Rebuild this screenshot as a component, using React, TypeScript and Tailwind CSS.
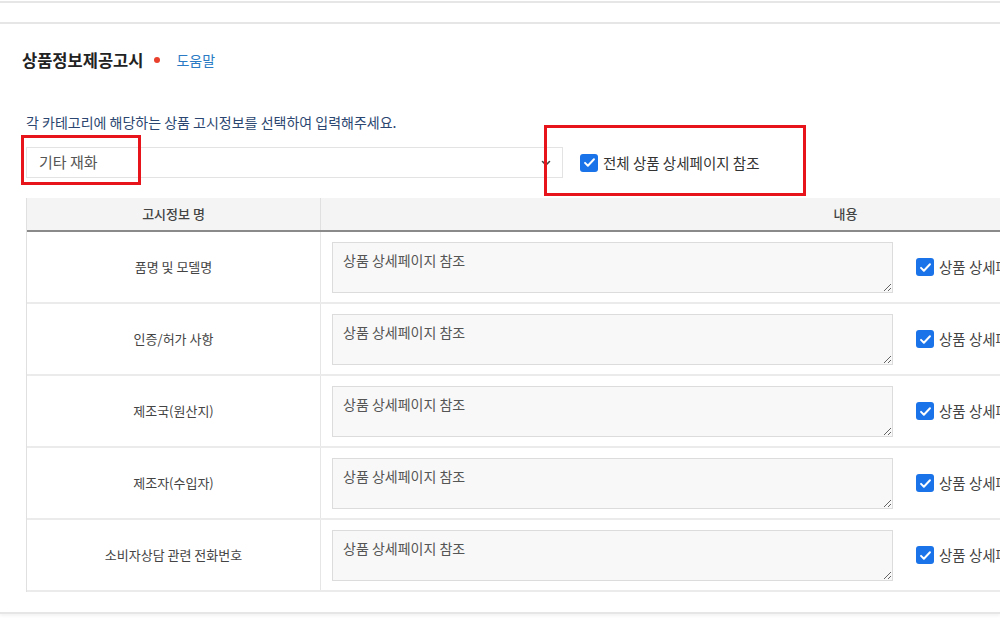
import React from 'react';

const ROWS = ['품명 및 모델명', '인증/허가 사항', '제조국(원산지)', '제조자(수입자)', '소비자상담 관련 전화번호'];

function CheckBox() {
  return (
    <span className="flex h-[18px] w-[18px] shrink-0 items-center justify-center rounded-[3px] bg-[#1a73e8]">
      <svg width="13" height="13" viewBox="0 0 16 16" fill="none">
        <path d="M2.5 8.5l3.5 3.5 7.5-8" stroke="white" strokeWidth="2.4" strokeLinecap="round" strokeLinejoin="round" />
      </svg>
    </span>
  );
}

export default function App() {
  return (
    <div
      className="relative h-[632px] w-[1000px] overflow-hidden bg-white text-[#333]"
      style={{ fontFamily: '"Noto Sans CJK KR", "Noto Sans", sans-serif' }}
    >
      {/* previous card edge */}
      <div className="h-[3px] border-b-2 border-[#e6e6e6]" />

      <div className="mt-[19px] border-t-2 border-b-2 border-[#e6e6e6] pb-[20px] shadow-[0_2px_3px_rgba(0,0,0,0.05)]">
        <div className="flex items-center pl-[22px] pt-[26px]">
          <h2 className="text-[16.5px] font-bold leading-[20px] text-[#222]">상품정보제공고시</h2>
          <span className="ml-[11px] h-[6px] w-[6px] rounded-full bg-[#e8402c]" />
          <a className="ml-[16px] text-[14px] leading-[20px] text-[#2a7bc4]">도움말</a>
        </div>

        <p className="mt-[43px] pl-[26px] text-[14px] leading-[18px] text-[#2b4670]">
          각 카테고리에 해당하는 상품 고시정보를 선택하여 입력해주세요.
        </p>

        <div className="mt-[16px] flex items-center pl-[26px]">
          <div className="flex h-[31px] w-[537px] items-center justify-between border border-[#e3e3e3] pl-[12px] pr-[10px]">
            <span className="text-[15px] text-[#555]">기타 재화</span>
            <svg width="12" height="12" viewBox="0 0 12 12" fill="none">
              <path d="M2.5 4.5L6 8l3.5-3.5" stroke="#444" strokeWidth="1.6" strokeLinecap="round" strokeLinejoin="round" />
            </svg>
          </div>
          <label className="ml-[17px] flex items-center gap-[5px] text-[14.5px] text-[#333]">
            <CheckBox />
            전체 상품 상세페이지 참조
          </label>
        </div>

        <div className="ml-[26px] mt-[20px] w-[1344px] border-l border-[#e0e0e0]">
          <div className="flex h-[34px] border-b-2 border-[#8a8a8a] bg-[#f4f4f4] text-[13px] font-medium text-[#444]">
            <div className="flex w-[294px] items-center justify-center border-r border-[#e0e0e0]">고시정보 명</div>
            <div className="flex flex-1 items-center justify-center">내용</div>
          </div>
          {ROWS.map((name) => (
            <div key={name} className="flex h-[72px] border-b-2 border-[#ebebeb]">
              <div className="flex w-[294px] items-center justify-center border-r border-[#e6e6e6] text-[13px] text-[#444]">
                {name}
              </div>
              <div className="flex flex-1 items-center pl-[11px]">
                <textarea
                  readOnly
                  defaultValue="상품 상세페이지 참조"
                  className="h-[51px] w-[561px] border border-[#dcdcdc] bg-[#f8f8f8] px-[10px] pt-[9px] text-[14px] leading-[17px] text-[#555] outline-none"
                />
                <label className="ml-[23px] flex items-center gap-[5px] whitespace-nowrap text-[14.5px] text-[#444]">
                  <CheckBox />
                  상품 상세페이지 참조
                </label>
              </div>
            </div>
          ))}
        </div>
      </div>

      {/* annotation boxes */}
      <div className="pointer-events-none absolute left-[21px] top-[135px] h-[50px] w-[120px] border-[3px] border-[#e8141b]" />
      <div className="pointer-events-none absolute left-[544px] top-[125px] h-[71px] w-[262px] border-[3px] border-[#e8141b]" />
    </div>
  );
}
